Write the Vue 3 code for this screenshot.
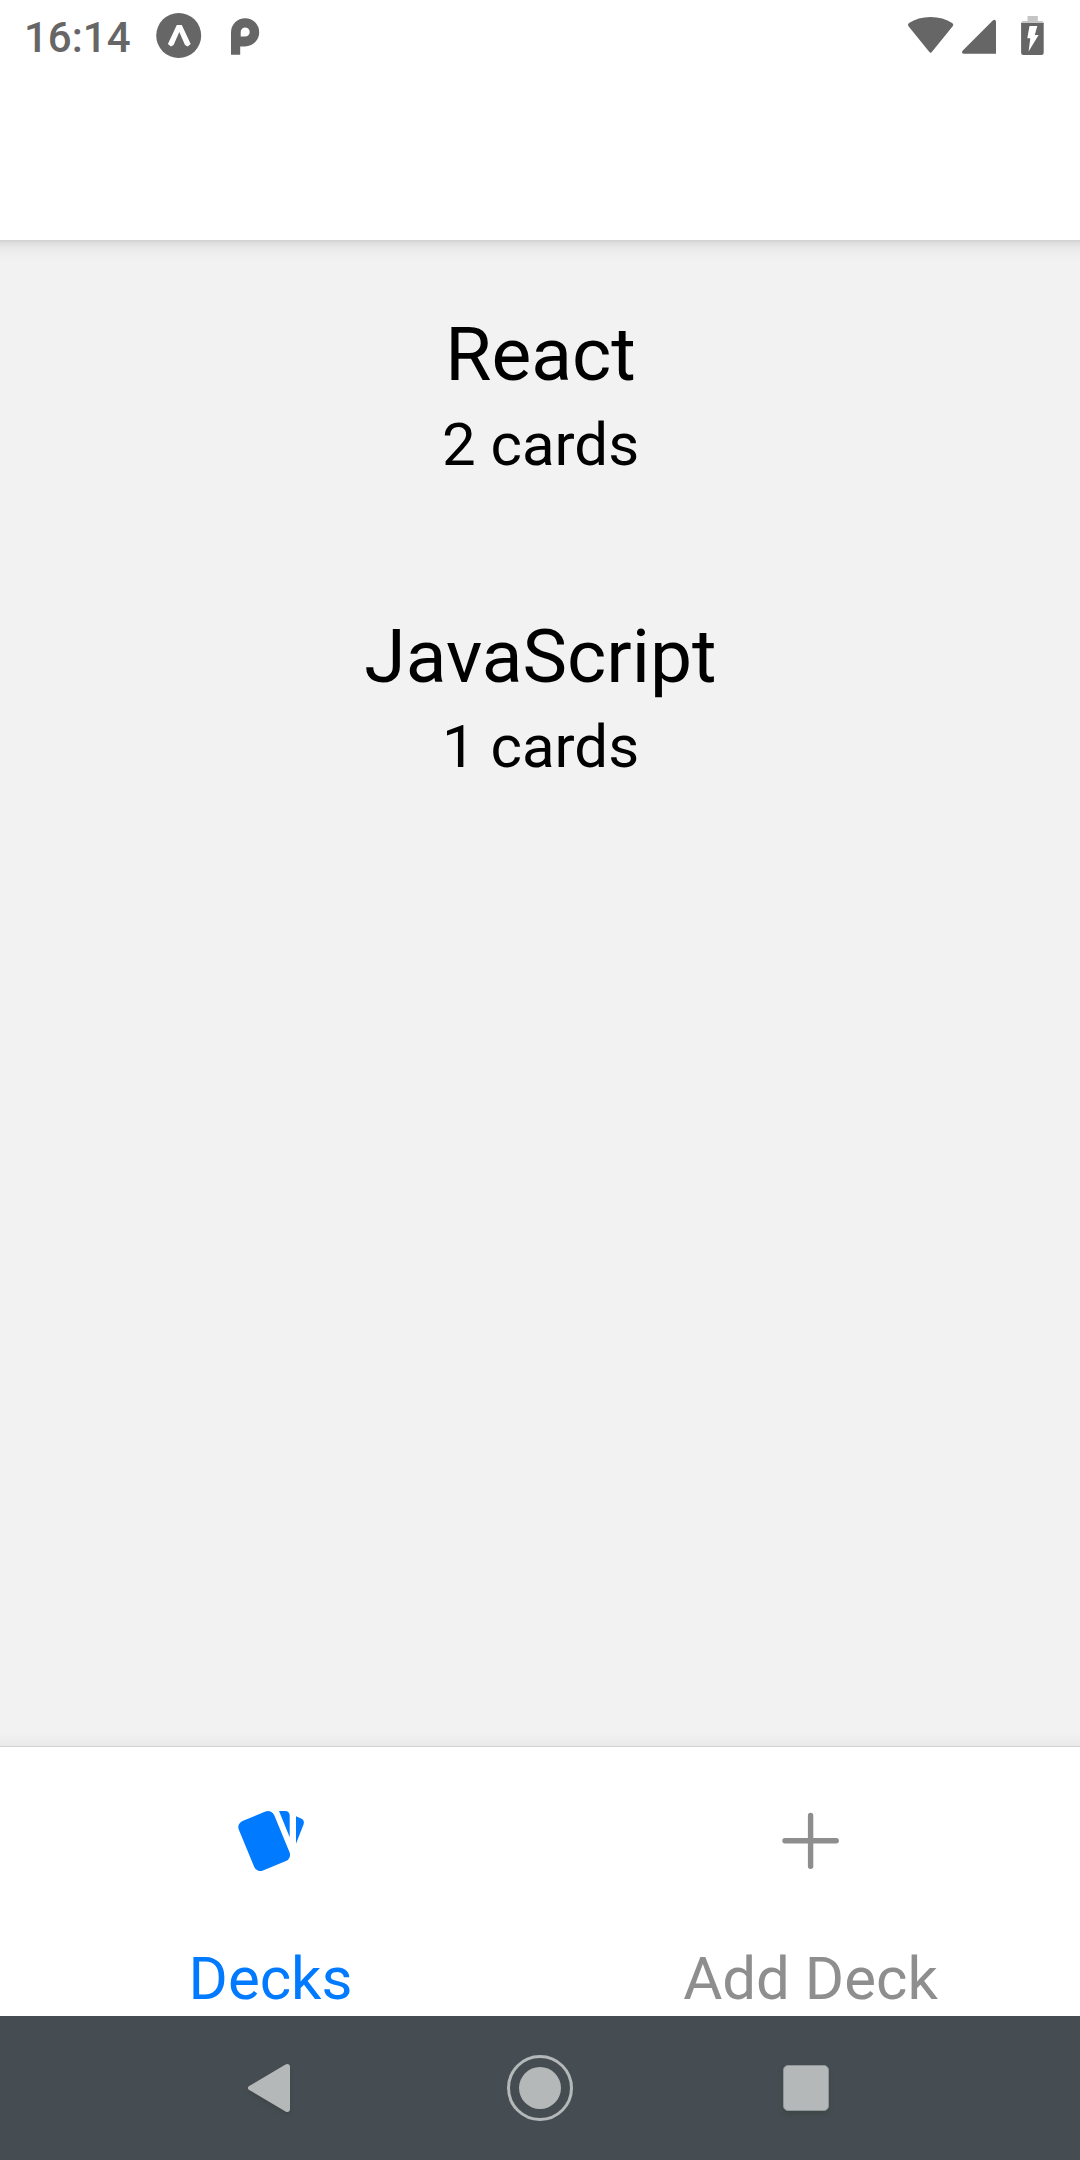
<script setup>
const decks = [
  { title: 'React', count: 2 },
  { title: 'JavaScript', count: 1 },
]
</script>

<template>
  <div class="screen">
    <header class="header">
      <div class="status">
        <span class="clock">16:14</span>
        <svg class="expo" width="46" height="46" viewBox="156 12 46 46">
          <circle cx="178.7" cy="35.5" r="22.5" fill="#666" />
          <path d="M176.800 25h5l8.900 19-3 2.500-2.700-1.400-5.700-13.100-5.700 13.100-2.700 1.400-3-2.500z" fill="#fff" />
        </svg>
        <svg class="pocket" width="30" height="40" viewBox="230 17 30 40">
          <path fill="#666" fill-rule="evenodd" d="M231 54.700V32.200a14.100 14.100 0 1 1 14.100 14.200H240.200v8.300zM240.700 36.500V32a4.500 4.500 0 1 1 4.500 4.500z" />
        </svg>
        <span class="spacer"></span>
        <svg class="wifi" width="48" height="40" viewBox="907 16 48 40">
          <path fill="#666" d="M908.500 26.300Q907 24.500 909 23Q918 17 930.600 17T952.200 23Q954.200 24.500 952.700 26.300L932 51.800Q930.600 53.700 929.200 51.800z" />
        </svg>
        <svg class="signal" width="36" height="36" viewBox="961 19 36 36">
          <path fill="#666" d="M992.800 20.600Q994 19.500 995 20Q996 20.400 996 21.800V53.700H963.600Q962 53.700 962 52.300Q961.900 51.500 962.800 50.600z" />
        </svg>
        <svg class="battery" width="24" height="42" viewBox="1020 15 24 42">
          <path fill="#c5c5c5" d="M1027.500 16h10.300v5h3.700q2.200 0 2.200 2.200V24h-22.600v-.8q0-2.200 2.200-2.200h4.200z" />
          <path fill="#666" d="M1021.100 23h22.600v29.800q0 2.200-2.200 2.200h-18.200q-2.200 0-2.200-2.200z" />
          <path fill="#fff" d="M1029.500 26h7.800l-2.500 9h3.800l-10 16.500 1.700-13.200h-3z" />
        </svg>
      </div>
    </header>

    <main class="decks">
      <section v-for="deck in decks" :key="deck.title" class="deck">
        <h2>{{ deck.title }}</h2>
        <p>{{ deck.count }} cards</p>
      </section>
    </main>

    <nav class="tabs">
      <a class="tab active">
        <svg width="72" height="72" viewBox="234 1804 72 72" fill="currentColor">
          <rect x="245.100" y="1814.200" width="38.200" height="53.600" rx="6.700" transform="rotate(-22.500 264.200 1841)" />
          <path d="M279 1811h6q4.700 0 4.700 4.700v21.500z" />
          <path d="M296 1816.300l5 2.200q3.900 1.800 2.600 5.800L296 1843.700z" />
        </svg>
        <span>Decks</span>
      </a>
      <a class="tab">
        <svg width="72" height="72" viewBox="774 1804 72 72" fill="none" stroke="currentColor" stroke-width="5.400" stroke-linecap="round">
          <path d="M785 1840.700h51.200M810.600 1815.500v50.700" />
        </svg>
        <span>Add Deck</span>
      </a>
    </nav>

    <footer class="system">
      <svg class="back" width="54" height="60" viewBox="242 2058 54 60">
        <path fill="#b4b8b9" d="M248.800 2086.300L285.500 2064.600Q287.500 2063.500 289 2064.500Q290 2065.200 290 2067V2109Q290 2110.800 289 2111.500Q287.500 2112.500 285.500 2111.400L248.800 2089.700Q247.900 2089 247.900 2088T248.800 2086.300z" />
      </svg>
      <svg class="home" width="70" height="70" viewBox="505 2053 70 70">
        <circle cx="540" cy="2088" r="31.500" fill="none" stroke="#b4b8b9" stroke-width="3" />
        <circle cx="540" cy="2088" r="21" fill="#b4b8b9" />
      </svg>
      <span class="recent"></span>
    </footer>
  </div>
</template>

<style>
body {
  margin: 0;
}
</style>

<style scoped>
.screen {
  width: 1080px;
  height: 2160px;
  display: flex;
  flex-direction: column;
  overflow: hidden;
  background: #f2f2f2;
  font-family: Roboto, sans-serif;
  color: #000;
}
svg {
  display: block;
  flex: none;
}
.header {
  height: 240px;
  flex: none;
  background: #fff;
}
.status {
  display: flex;
  height: 72px;
  align-items: flex-start;
}
.clock {
  margin: 13px 0 0 24px;
  width: 132px;
  font-size: 42px;
  font-weight: 500;
  line-height: 50px;
  color: #666;
}
.expo {
  margin-top: 12px;
}
.pocket {
  margin: 17px 0 0 28px;
}
.spacer {
  flex: 1;
}
.wifi {
  margin: 16px 6px 0 0;
}
.signal {
  margin: 19px 23px 0 0;
}
.battery {
  margin: 15px 36px 0 0;
}
.decks {
  flex: 1;
  padding: 70px 0 0 1px;
  box-sizing: border-box;
  text-align: center;
  background:
    linear-gradient(#d0d0d0, #dfdfdf 3px, #e8e8e8 8px, #efefef 15px, #f2f2f2 21px) top / 100% 21px no-repeat,
    linear-gradient(#f2f2f2, #e9e9e9) bottom / 100% 12px no-repeat,
    #f2f2f2;
}
.deck {
  height: 302px;
}
.deck h2 {
  margin: 0 0 12px;
  font-size: 75px;
  font-weight: 400;
  line-height: 88px;
}
.deck p {
  margin: 0;
  font-size: 60px;
  line-height: 70px;
}
.tabs {
  height: 269px;
  flex: none;
  display: flex;
  border-top: 1px solid #d2d2d2;
  background: #fff;
}
.tab {
  flex: 1;
  display: flex;
  flex-direction: column;
  align-items: center;
  padding-top: 57px;
  color: #8e8e8e;
}
.tab.active {
  color: #007aff;
}
.tab span {
  margin-top: 68px;
  padding-left: 1px;
  font-size: 60px;
  line-height: 70px;
}
.system {
  height: 144px;
  flex: none;
  display: flex;
  align-items: center;
  background: #454d52;
}
.back {
  margin-left: 242px;
  filter: drop-shadow(0 3px 2px rgba(60, 67, 66, 0.7));
}
.home {
  margin-left: 209px;
}
.recent {
  width: 46px;
  height: 46px;
  margin-left: 208px;
  box-sizing: border-box;
  border: 1px solid #8f9696;
  border-radius: 5px;
  background: #b4b8b9;
  box-shadow: 0 3px 4px rgba(60, 67, 66, 0.7);
}
</style>
